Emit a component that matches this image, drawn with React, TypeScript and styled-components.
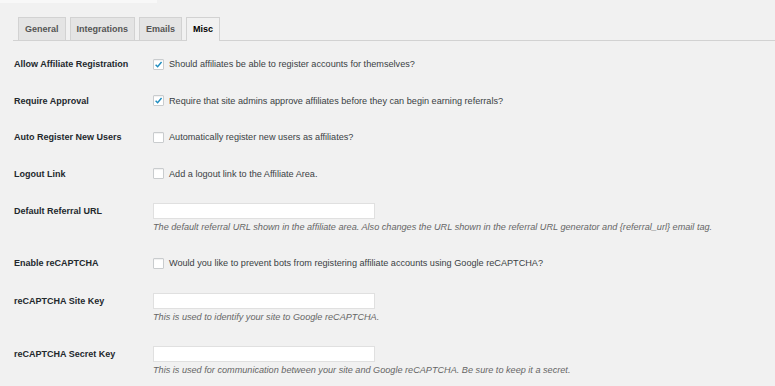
import { createGlobalStyle } from "styled-components";
import styled from "styled-components";

const GlobalStyle = createGlobalStyle`
  html, body {
    margin: 0;
    padding: 0;
    background: #f1f1f1;
  }
  body {
    font-family: "Liberation Sans", Arial, sans-serif;
    color: #32373c;
    font-size: 9px;
  }
`;

const Page = styled.div`
  width: 775px;
  height: 386px;
  overflow: hidden;
  background: #f1f1f1;
`;

const TopStrip = styled.div`
  width: 157px;
  height: 3px;
  background: #f8f8f8;
`;

const TabBar = styled.nav`
  display: flex;
  gap: 4px;
  margin: 14px 0 0 13px;
  padding-left: 5px;
  border-bottom: 1px solid #d2d2d2;
`;

const Tab = styled.div<{ $active?: boolean }>`
  height: 22px;
  padding: 0 6px;
  display: flex;
  align-items: center;
  font-size: 9px;
  font-weight: 700;
  color: ${(p) => (p.$active ? "#000" : "#555")};
  background: ${(p) => (p.$active ? "#f1f1f1" : "#e4e4e4")};
  border: 1px solid #d2d2d2;
  border-bottom: none;
  margin-bottom: ${(p) => (p.$active ? "-1px" : "0")};
  padding-bottom: ${(p) => (p.$active ? "1px" : "0")};
`;

const Form = styled.div`
  padding-top: 5px;
`;

const Row = styled.div`
  display: grid;
  grid-template-columns: 139px 1fr;
  padding: 11px 0 11px 14px;
  align-items: start;
`;

const Label = styled.div<{ $input?: boolean }>`
  font-weight: 700;
  font-size: 9px;
  color: #23282d;
  line-height: ${(p) => (p.$input ? "16px" : "14.5px")};
`;

const Field = styled.div`
  display: flex;
  flex-direction: column;
`;

const CheckLine = styled.label`
  display: flex;
  align-items: center;
  gap: 5px;
  line-height: 14.5px;
  font-size: 9.15px;
  color: #3a3f44;
`;

const Box = styled.span`
  width: 9px;
  height: 9px;
  border: 1px solid #c9ccce;
  background: #fff;
  border-radius: 1px;
  display: inline-flex;
  align-items: center;
  justify-content: center;
  box-shadow: inset 0 1px 1px rgba(0, 0, 0, 0.06);
`;

const TextInput = styled.div`
  width: 220px;
  height: 14px;
  background: #fff;
  border: 1px solid #e0e0e0;
`;

const Description = styled.p`
  margin: 1px 0 0;
  font-style: italic;
  font-size: 9.15px;
  line-height: 14px;
  color: #666;
`;

type Item =
  | { kind: "check"; label: string; text: string; checked?: boolean }
  | { kind: "input"; label: string; desc: string };

const items: Item[] = [
  {
    kind: "check",
    label: "Allow Affiliate Registration",
    text: "Should affiliates be able to register accounts for themselves?",
    checked: true,
  },
  {
    kind: "check",
    label: "Require Approval",
    text: "Require that site admins approve affiliates before they can begin earning referrals?",
    checked: true,
  },
  {
    kind: "check",
    label: "Auto Register New Users",
    text: "Automatically register new users as affiliates?",
  },
  { kind: "check", label: "Logout Link", text: "Add a logout link to the Affiliate Area." },
  {
    kind: "input",
    label: "Default Referral URL",
    desc: "The default referral URL shown in the affiliate area. Also changes the URL shown in the referral URL generator and {referral_url} email tag.",
  },
  {
    kind: "check",
    label: "Enable reCAPTCHA",
    text: "Would you like to prevent bots from registering affiliate accounts using Google reCAPTCHA?",
  },
  {
    kind: "input",
    label: "reCAPTCHA Site Key",
    desc: "This is used to identify your site to Google reCAPTCHA.",
  },
  {
    kind: "input",
    label: "reCAPTCHA Secret Key",
    desc: "This is used for communication between your site and Google reCAPTCHA. Be sure to keep it a secret.",
  },
];

const Check = () => (
  <svg width="9" height="9" viewBox="0 0 10 10">
    <path d="M1.8 5.2 L4 7.4 L8.4 2.2" fill="none" stroke="#1e8cbe" strokeWidth="1.6" />
  </svg>
);

const App = () => {
  return (
    <Page>
      <GlobalStyle />
      <TopStrip />
      <TabBar>
        <Tab>General</Tab>
        <Tab>Integrations</Tab>
        <Tab>Emails</Tab>
        <Tab $active>Misc</Tab>
      </TabBar>
      <Form>
        {items.map((item) =>
          item.kind === "check" ? (
            <Row key={item.label}>
              <Label>{item.label}</Label>
              <CheckLine>
                <Box>{item.checked && <Check />}</Box>
                {item.text}
              </CheckLine>
            </Row>
          ) : (
            <Row key={item.label}>
              <Label $input>{item.label}</Label>
              <Field>
                <TextInput />
                <Description>{item.desc}</Description>
              </Field>
            </Row>
          )
        )}
      </Form>
    </Page>
  );
};

export default App;
